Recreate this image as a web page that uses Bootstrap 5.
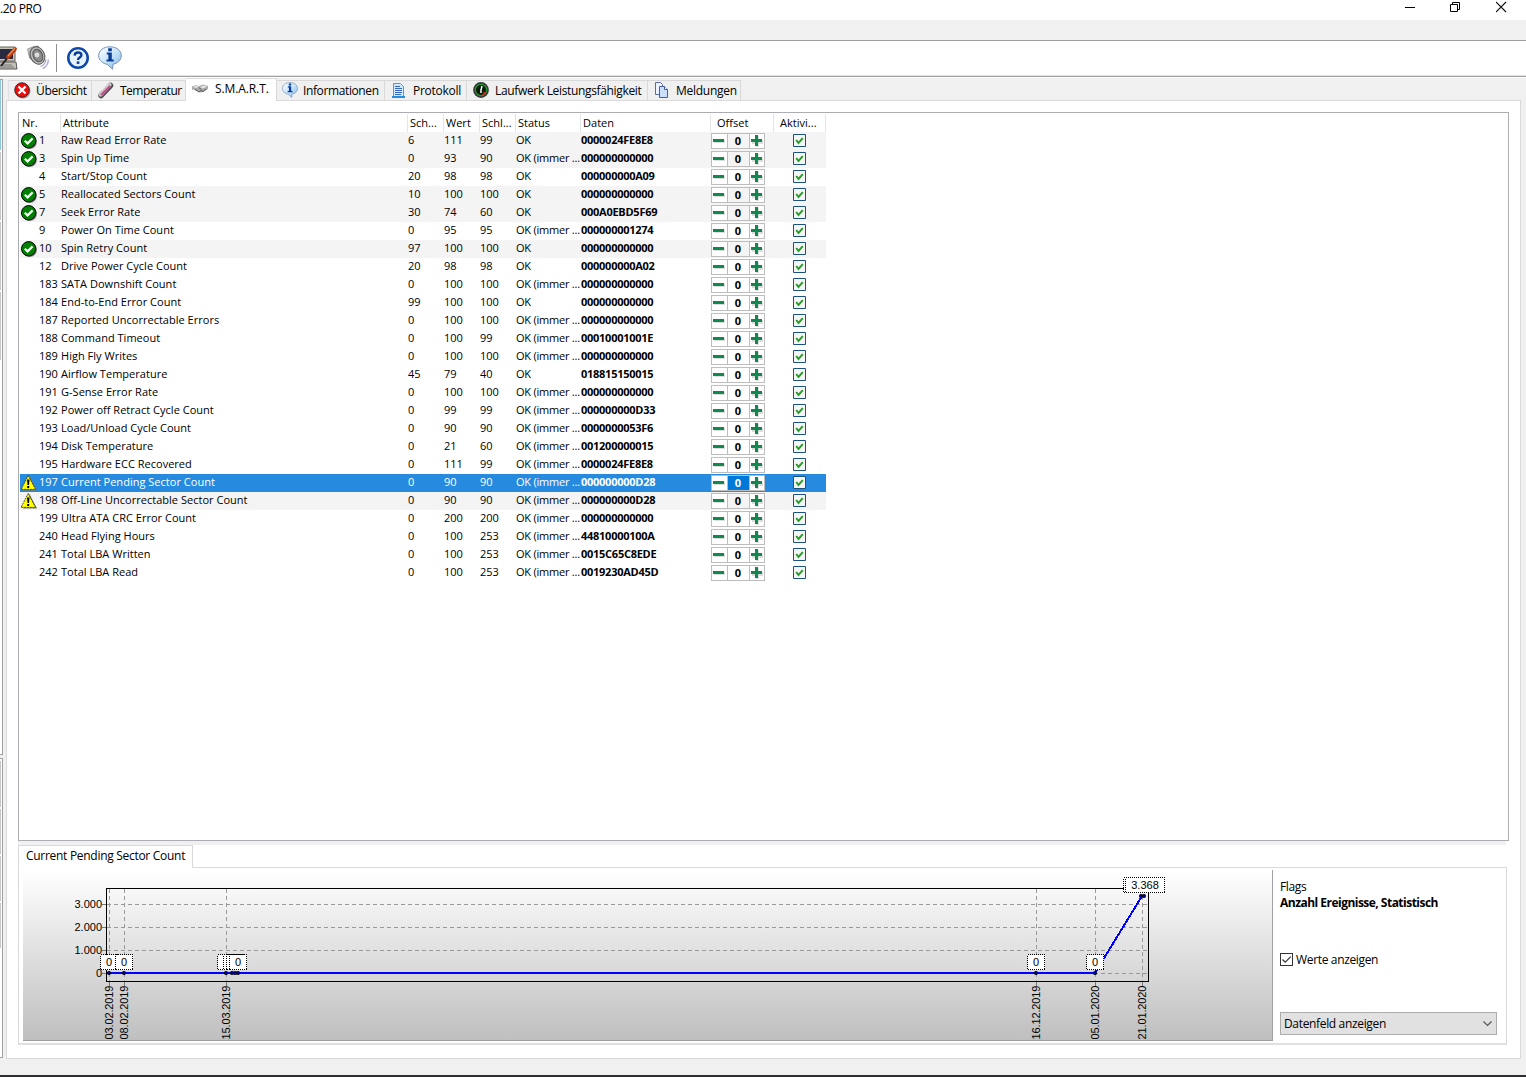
<!DOCTYPE html>
<html lang="de">
<head>
<meta charset="utf-8">
<title>S.M.A.R.T.</title>
<link href="https://cdn.jsdelivr.net/npm/bootstrap@5.3.0/dist/css/bootstrap.min.css" rel="stylesheet">
<style>
body{width:1526px;height:1077px;overflow:hidden;background:#f0f0f0;color:#000;font:12px/18px "Open Sans","Noto Sans",sans-serif;letter-spacing:-.34px}
svg{display:block;flex:none}
.titlebar{height:20px;background:#fff;padding-left:0;line-height:18px}
.wbtns{gap:35px;padding:1px 19px 0 0}
.menustrip{height:21px;border-bottom:1px solid #a0a0a0}
.toolstrip{height:35px;background:#fff;border-bottom:1px solid #e3e3e3}
.toolline{height:2px;background:#fff;border-top:1px solid #a0a0a0}
.workarea{height:981px}
.sidecol{width:6px;padding-top:1px}
.sidebox{width:3px;background:#fff;border:1px solid #a0a0a5;border-left:0}
.sidebox i{display:block;width:1px;background:#c6c6c6;margin-bottom:2px}
.pages{width:1515px}
.tabrow{height:22px;padding-left:2px;position:relative;z-index:1}
.tabitem{height:20px;margin-top:2px;border:1px solid #d9d9d9;border-left:0;border-bottom:0;line-height:20px;white-space:nowrap;gap:5px;padding-left:5px}
.tabitem.on{height:23px;margin-top:0;background:#fff;line-height:20px;gap:7px;letter-spacing:-.1px}
.tabitem.wide{gap:6px}
.tabitem.wider{gap:7px;letter-spacing:-.26px}
.pagebody{height:959px;background:#fff;border:1px solid #d9d9d9;padding:11px 11px 0 11px}
.listbox{width:1491px;height:729px;border:1px solid #abadb3;padding:0 1px;font-size:11px;letter-spacing:.02px}
.gridline,.headline{width:806px;display:flex}
.headline{height:19px;line-height:18px}
.headline>div{border-right:1px solid #e5e5e5;margin-top:1px;height:18px;white-space:nowrap;overflow:hidden;padding-left:2px}
.gridline{height:18px;line-height:16px}
.gridline>div{white-space:nowrap}
.gridline.alt{background:#f4f4f4}
.gridline.sel{background:#268bdf;color:#fff}
.c0{width:19px}.c1{width:22px}.c2{width:347px}.c3,.c4,.c5{width:36px}.c6{width:65px;letter-spacing:-.22px}.c7{width:130px;font-weight:700;letter-spacing:-.26px}
.c8{width:63px}.c9{flex:1;padding:2px 0 0 19px}
.spin{width:54px;height:16px;margin-top:1px;border:1px solid #bdbdbd;background:#fff;display:flex;color:#000}
.spin b{width:23px;border:1px solid #bdbdbd;border-width:0 1px;padding-right:1px;text-align:center;line-height:14px}
.alt .spin b{background:#f4f4f4}.sel .spin b{background:#0078d7;color:#fff}
.splitline{height:4px;width:1488px;background:#f0f0f0}
.subtabs{height:22px;position:relative;z-index:1}
.subtab{width:175px;height:23px;border:1px solid #d9d9d9;border-bottom:0;background:#fff;padding-left:7px;line-height:20px;letter-spacing:-.29px}
.subbody{width:1489px;height:178px;border:1px solid #d9d9d9;border-bottom:2px solid #e0e0e0;padding:2px 0 0 4px}
.chartbox{width:1250px;height:171px;border:1px solid #a0a0a0;border-width:0 1px 1px 0;background:linear-gradient(#fff,#bfbfbf)}
.chartbox text{font:11px "Liberation Sans",sans-serif;letter-spacing:0}
.flagcol{width:224px;padding:9px 0 0 7px;line-height:16px}
.flagcol strong{letter-spacing:-.52px}
.cbox{width:13px;height:13px;border:1px solid #333;margin-top:-1px}
.combo{width:217px;height:23px;background:#e1e1e1;border:1px solid #adadad;padding:0 4px 0 3px;margin-top:44px}
.statusline{height:16px}
.darkedge{height:2px;background:#2d2f33}
</style>
</head>
<body class="d-flex flex-column">
<svg width="0" height="0" class="position-absolute"><defs>
<linearGradient id="bub" x2="1" y2="1"><stop stop-color="#fff"/><stop offset=".5" stop-color="#c6e4fa"/><stop offset="1" stop-color="#7eb4e2"/></linearGradient>
<linearGradient id="met" x2="1" y2="1"><stop stop-color="#ddd"/><stop offset="1" stop-color="#555"/></linearGradient>
<symbol id="ok" viewBox="0 0 18 18"><circle cx="9.7" cy="9.8" r="7.2" fill="#888"/><circle cx="8.7" cy="8.8" r="7.2" fill="#008000" stroke="#000"/><path d="M4.8 8.7l2.8 2.7 5-5" fill="none" stroke="#fff" stroke-width="2.2"/></symbol>
<symbol id="warn" viewBox="0 0 18 18"><path d="M9.500 2L17 16.500H3z" fill="#777"/><path d="M8.200 1.500L15.600 15.400H1z" fill="#ff0" stroke="#222" stroke-width=".8" stroke-dasharray="2 .8"/><path d="M7 5.500h2.500l-.5 5.500H7.500zM7.200 12h2v2H7.200z" fill="#000"/></symbol>
<symbol id="info" viewBox="0 0 24 24"><path d="M12 .8c6.500 0 11.300 3.600 11.300 8.900 0 4.400-3.800 7.700-8.300 8.500l-.4 5-5.100-4.800C4.800 17.500.7 14.400.7 9.700.7 4.400 5.500.8 12 .8z" fill="url(#bub)" stroke="#7391b3"/><path d="M10.200 2.300h3.600v3h-3.600zM8.800 6.500h5v7h1.900v2H8.500v-2h1.900V8.400H8.800z" fill="#0a3d91"/></symbol>
</defs></svg>

<div class="titlebar d-flex justify-content-between"><span>.20 PRO</span>
 <div class="wbtns d-flex">
  <svg width="11" height="12"><path d="M1 6.500h10" stroke="#000"/></svg>
  <svg width="11" height="12" fill="none" stroke="#000"><path d="M.5 3.500h7v7h-7zM2.500 3.500v-2h7v7h-2"/></svg>
  <svg width="11" height="12" stroke="#111" stroke-width="1.100"><path d="M0 1l10 10M10 1l-10 10"/></svg>
 </div></div>
<div class="menustrip"></div>
<div class="toolstrip d-flex">
 <svg width="130" height="34">
  <path d="M-4 6h19v14H-4z" fill="#c7c3bd" stroke="#665"/><path d="M-2 8h15v10H-2z" fill="#29293f"/><path d="M-4 21h20l1 7H-4z" fill="#c4c1bb" stroke="#555"/><path d="M0 24h12M0 26h14" stroke="#777"/><path d="M1 25l8-10" stroke="#222" stroke-width="2"/><path d="M8 16l7-8" stroke="#b93a10" stroke-width="3.800" stroke-linecap="round"/><path d="M8 15l7-8" stroke="#f28a45" stroke-width="1.300"/>
  <path d="M27.500 8l6-2.500 5-.5-4 16-5-4z" fill="url(#met)" stroke="#777" stroke-width=".6"/><ellipse cx="37.500" cy="14.500" rx="7" ry="9" transform="rotate(-25 37.500 14.500)" fill="#bdbdbd" stroke="#555"/><ellipse cx="37.800" cy="14.500" rx="4.600" ry="6.500" transform="rotate(-25 37.800 14.500)" fill="#8d8d8d" stroke="#555"/><circle cx="37" cy="14" r="2.400" fill="#ddd"/><path d="M40.500 25.500q5-1.500 5.300-7M42.500 27.500q6-2.500 5.800-9" fill="none" stroke="#a9a6d0" stroke-width="1.300"/>
  <path d="M56.500 3v28" stroke="#8d8d8d"/>
  <circle cx="78" cy="17" r="9.700" fill="#fff" stroke="#0e48a8" stroke-width="2.600"/><circle cx="78" cy="17" r="8" fill="#e4f3fd"/><path d="M74.600 14.600q.1-3.100 3.500-3.100 3.300 0 3.300 2.600 0 1.500-1.800 2.500-1.600 1-1.600 2.400" fill="none" stroke="#0b3e97" stroke-width="2.400"/><path d="M76.700 20.400h2.700v2.500h-2.700z" fill="#0b3e97"/>
  <use href="#info" x="98" y="5" width="24" height="24"/>
 </svg></div>
<div class="toolline"></div>

<div class="workarea d-flex">
 <div class="sidecol"><div class="sidebox" style="height:676px"><i style="height:70px;background:#8cc8dc"></i><i style="height:68px"></i><i style="height:68px"></i><i style="height:68px"></i></div>
 <div class="sidebox" style="height:300px;margin-top:3px"><i style="height:46px;margin-top:2px"></i><i style="height:45px"></i><i style="height:45px"></i><i style="height:45px"></i></div></div>
 <div class="pages">
  <div class="tabrow d-flex">
   <div class="tabitem d-flex border-start" style="width:84px"><svg width="17" height="18"><circle cx="9" cy="10" r="7.500" fill="#999"/><circle cx="8" cy="9" r="7.300" fill="#f00a0a" stroke="#222" stroke-width=".8"/><path d="M4.500 5.500l7 7M11.500 5.500l-7 7" stroke="#fff" stroke-width="2.400"/></svg><span>Übersicht</span></div>
   <div class="tabitem wide d-flex" style="width:94px;letter-spacing:-.5px"><svg width="17" height="18"><path d="M4 14.500L13.500 4.500" stroke="#4c4c4c" stroke-width="5.500" stroke-linecap="round"/><path d="M3.500 13.500L12.500 3.800" stroke="#c4c4c4" stroke-width="4.300" stroke-linecap="round"/><path d="M4 14L13 5" stroke="#d22d83" stroke-width="1.600"/><path d="M4.500 9.500L10.500 3" stroke="#f2f2f2"/></svg><span>Temperatur</span></div>
   <div class="tabitem on d-flex" style="width:91px"><svg width="17" height="18"><path d="M1 7.500l4-1.500 3 1 4-1.500 5 1.500v3l-5 3-3 .5-3-2-5-1z" fill="#aaa"/><path d="M2 8l4-1.500 2 1-3 1.500zM9 8l4-1.500 3 1-4 2z" fill="#e6e6e6"/><path d="M4 10.500l4 2.500 2-1.500 2 1 3-2.500M8 8.500l2 2" stroke="#555" fill="none"/></svg><span>S.M.A.R.T.</span></div>
   <div class="tabitem d-flex" style="width:108px;letter-spacing:-.38px"><svg width="16" height="18"><use href="#info" y="1" width="16" height="16"/></svg><span>Informationen</span></div>
   <div class="tabitem wider d-flex" style="width:82px"><svg width="16" height="18"><path d="M3.500 2.500h7l3 3v11h-10z" fill="#cde8ff" stroke="#4c9ce0"/><path d="M2 16h13" stroke="#268cdd" stroke-width="2"/><path d="M5 5.500h5M5 7.500h7M5 9.500h7M5 11.500h7M5 13.500h6" stroke="#3768bb"/></svg><span>Protokoll</span></div>
   <div class="tabitem d-flex" style="width:181px"><svg width="18" height="18"><circle cx="9" cy="9" r="7.900" fill="#3a3a3a"/><circle cx="9" cy="9" r="5.600" fill="#061c07" stroke="#249a30" stroke-width="1.200"/><path d="M9 12V9l1-4" stroke="#fff" stroke-width="1.500" fill="none"/><path d="M13 11l-2 3" stroke="#e01818" stroke-width="2"/></svg><span>Laufwerk Leistungsfähigkeit</span></div>
   <div class="tabitem wider d-flex" style="width:93px"><svg width="16" height="18"><path d="M2.500 1.500h5l2 2v10h-7z" fill="#edf4ff" stroke="#5c6ba5"/><path d="M6.500 5.500h5l3 3v8h-8z" fill="#c9dffb" stroke="#4b5d9c"/><path d="M11.500 5.500v3h3" fill="#fff" stroke="#4b5d9c"/></svg><span>Meldungen</span></div>
  </div>
  <div class="pagebody">
   <div class="listbox">
    <div class="headline"><div style="width:41px">Nr.</div><div style="width:347px">Attribute</div><div style="width:36px">Sch...</div><div style="width:36px">Wert</div><div style="width:36px">Schl...</div><div style="width:65px">Status</div><div style="width:130px">Daten</div><div style="width:63px;padding-left:6px">Offset</div><div style="width:52px;padding-left:6px">Aktivi...</div></div>
    <div id="attrs"></div>
   </div>
   <div class="splitline"></div>
   <div class="subtabs"><div class="subtab">Current Pending Sector Count</div></div>
   <div class="subbody d-flex">
    <div class="chartbox"><svg id="chart" width="1249" height="170" viewBox="23 870 1249 170"></svg></div>
    <div class="flagcol"><div>Flags</div><strong>Anzahl Ereignisse, Statistisch</strong>
     <div class="d-flex align-items-center" style="margin-top:41px;gap:3px"><svg class="cbox" viewBox="0 0 11 11"><path d="M1.500 5.500L4.200 8.200 9.800 2.600" fill="none" stroke="#333" stroke-width="1.200"/></svg><span>Werte anzeigen</span></div>
     <div class="combo d-flex justify-content-between align-items-center"><span>Datenfeld anzeigen</span><svg width="9" height="6"><path d="M.5 .5l4 4 4-4" fill="none" stroke="#555" stroke-width="1.200"/></svg></div>
    </div>
   </div>
  </div>
 </div>
</div>
<div class="statusline"></div><div class="darkedge"></div>
<script src="https://cdn.jsdelivr.net/npm/bootstrap@5.3.0/dist/js/bootstrap.bundle.min.js"></script>
<script>
// icon | number | attribute | threshold | value | worst | always-ok flag | raw data
const rows = `ok|1|Raw Read Error Rate|6|111|99||0000024FE8E8
ok|3|Spin Up Time|0|93|90|1|000000000000
|4|Start/Stop Count|20|98|98||000000000A09
ok|5|Reallocated Sectors Count|10|100|100||000000000000
ok|7|Seek Error Rate|30|74|60||000A0EBD5F69
|9|Power On Time Count|0|95|95|1|000000001274
ok|10|Spin Retry Count|97|100|100||000000000000
|12|Drive Power Cycle Count|20|98|98||000000000A02
|183|SATA Downshift Count|0|100|100|1|000000000000
|184|End-to-End Error Count|99|100|100||000000000000
|187|Reported Uncorrectable Errors|0|100|100|1|000000000000
|188|Command Timeout|0|100|99|1|00010001001E
|189|High Fly Writes|0|100|100|1|000000000000
|190|Airflow Temperature|45|79|40||018815150015
|191|G-Sense Error Rate|0|100|100|1|000000000000
|192|Power off Retract Cycle Count|0|99|99|1|000000000D33
|193|Load/Unload Cycle Count|0|90|90|1|0000000053F6
|194|Disk Temperature|0|21|60|1|001200000015
|195|Hardware ECC Recovered|0|111|99|1|0000024FE8E8
warn|197|Current Pending Sector Count|0|90|90|1|000000000D28
warn|198|Off-Line Uncorrectable Sector Count|0|90|90|1|000000000D28
|199|Ultra ATA CRC Error Count|0|200|200|1|000000000000
|240|Head Flying Hours|0|100|253|1|44810000100A
|241|Total LBA Written|0|100|253|1|0015C65C8EDE
|242|Total LBA Read|0|100|253|1|0019230AD45D`.split('\n').map(l => l.split('|'));
document.getElementById('attrs').innerHTML = rows.map(r => `<div class="gridline ${r[1]=='197'?'sel':r[0]?'alt':''}">
<div class="c0">${r[0]?`<svg width="18" height="18"><use href="#${r[0]}"/></svg>`:''}</div><div class="c1">${r[1]}</div><div class="c2">${r[2]}</div><div class="c3">${r[3]}</div><div class="c4">${r[4]}</div><div class="c5">${r[5]}</div><div class="c6">${r[6]?'OK (immer ...':'OK'}</div><div class="c7">${r[7]}</div>
<div class="c8"><div class="spin"><svg width="15" height="14"><path d="M2 6h11v3H2z" fill="#ddd"/><path d="M1 5h11v3H1z" fill="#118850"/></svg><b>0</b><svg width="14" height="14"><path d="M6 2h3v4h4v4H9v3H6v-3H2V6h4z" fill="#ddd"/><path d="M5 1h3v4h4v3H8v4H5V8H1V5h4z" fill="#118850"/></svg></div></div>
<div class="c9"><svg width="13" height="13"><path d="M.5 .5h12v12H.5z" fill="#f5f5f5" stroke="#1c5180"/><path d="M3.200 6l2.300 3 4.300-4.800" fill="none" stroke="#21a121" stroke-width="2"/></svg></div></div>`).join('');

let s = '<g fill="none" shape-rendering="crispEdges"><path d="M106.500 888.500H1148.500V981.500H106.500z" stroke="#000"/>';
for (const y of [904,927,950,973]) s += `<path d="M102 ${y}.5h4" stroke="#777"/><path d="M107 ${y}.5H1148" stroke="#999" stroke-dasharray="4 3"/>`;
const dates = [[109,'03.02.2019'],[124,'08.02.2019'],[226,'15.03.2019'],[1036,'16.12.2019'],[1095,'05.01.2020'],[1142,'21.01.2020']];
for (const [x] of dates) s += `<path d="M${x}.5 889V981" stroke="#999" stroke-dasharray="4 3"/><path d="M${x}.5 982v4" stroke="#777"/>`;
s += '<path d="M109 973H1095L1142 896H1145" stroke="#00f" stroke-width="2"/></g>';
for (const [x,y] of [[109,973],[124,973],[226,973],[232,973],[235,973],[238,973],[1036,973],[1095,973],[1141,896],[1144,896]]) s += `<rect x="${x-1.5}" y="${y-1.5}" width="3" height="3" rx="1" fill="#00a" stroke="#000"/>`;
const box = (x,y,w,t) => `<rect x="${x}.5" y="${y}.5" width="${w}" height="15" fill="#fff" stroke="#000" stroke-dasharray="1 1" shape-rendering="crispEdges"/><text x="${x+w/2+.5}" y="${y+12}" text-anchor="middle">${t}</text>`;
s += box(100,954,17,'0')+box(115,954,17,'0')+box(217,954,17,'')+box(223,954,17,'')+box(226,954,17,'')+box(229,954,17,'0')+box(1027,954,17,'0')+box(1086,954,17,'0')+box(1123,877,38,'')+box(1125,877,39,'3.368');
[['3.000',908],['2.000',931],['1.000',954],['0',977]].forEach(([t,y]) => s += `<text x="102" y="${y}" text-anchor="end">${t}</text>`);
for (const [x,t] of dates) s += `<text transform="translate(${x+4} 1039.5) rotate(-90)" textLength="54">${t}</text>`;
document.getElementById('chart').innerHTML = s;
</script>
</body>
</html>
